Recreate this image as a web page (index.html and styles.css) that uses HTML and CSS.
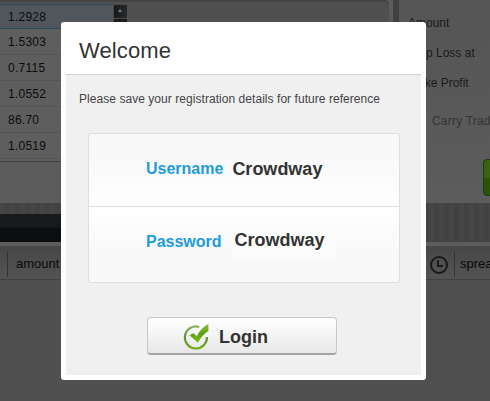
FILE: index.html
```html
<!DOCTYPE html>
<html lang="en">
<head>
<meta charset="utf-8">
<title>Welcome</title>
<link rel="stylesheet" href="styles.css">
</head>
<body>
<div class="platform">
  <div class="workspace">
    <section class="left">
      <div class="rates">
        <div class="list">
          <div class="rate selected">1.2928</div>
          <div class="rate">1.5303</div>
          <div class="rate">0.7115</div>
          <div class="rate">1.0552</div>
          <div class="rate">86.70</div>
          <div class="rate">1.0519</div>
        </div>
        <div class="scroll"><span class="up"></span><span class="thumb"></span></div>
        <div class="chart"></div>
      </div>
      <div class="footer"></div>
      <div class="stripes"></div>
      <div class="darkbar"></div>
    </section>
    <div class="divider"></div>
    <section class="right">
      <div class="order">
        <div class="field">Amount</div>
        <div class="field">Stop Loss at</div>
        <div class="field profit">Take Profit</div>
        <div class="carry">Carry Trad</div>
        <div class="go"></div>
      </div>
      <div class="stripes tall"></div>
    </section>
  </div>
  <div class="columns">
    <div class="col amount">amount</div>
    <div class="col clock">
      <svg width="20" height="20" viewBox="0 0 20 20"><circle cx="10" cy="10" r="8" fill="#505050" stroke="#191919" stroke-width="2"/><path d="M9 5V11H14" fill="none" stroke="#191919" stroke-width="2"/></svg>
    </div>
    <div class="col spread">sprea</div>
  </div>
</div>

<div class="modal">
  <h1>Welcome</h1>
  <div class="content">
    <p>Please save your registration details for future reference</p>
    <div class="card">
      <div class="row user"><span class="label">Username</span><span class="value">Crowdway</span></div>
      <div class="row pass"><span class="label">Password</span><span class="value">Crowdway</span></div>
    </div>
    <button class="login">
      <svg width="26" height="27" viewBox="0 0 26 27">
        <defs><linearGradient id="leaf" x1="0" y1="0" x2="0" y2="1"><stop offset="0" stop-color="#8fc03a"/><stop offset=".5" stop-color="#5c9f16"/><stop offset="1" stop-color="#7cc010"/></linearGradient>
        <linearGradient id="ring" x1="0" y1="0" x2="0" y2="1"><stop offset="0" stop-color="#8db065"/><stop offset=".5" stop-color="#5f9132"/><stop offset="1" stop-color="#6fae17"/></linearGradient></defs>
        <path d="M16.2 4A11 11 0 1 0 23.9 14" fill="none" stroke="url(#ring)" stroke-width="2.2"/>
        <path d="M6.4 12.3L10.6 10.3L13.8 13.2C16.4 8.5 19.5 4.2 25.4 1V8C20.8 10.6 18 14.5 14.9 19.8Z" fill="url(#leaf)"/>
      </svg>
      <span>Login</span>
    </button>
  </div>
</div>
</body>
</html>
```
FILE: styles.css
```css
* { box-sizing: border-box; }
body {
  margin: 0;
  width: 490px;
  height: 401px;
  overflow: hidden;
  background: #505050;
  font-family: "Liberation Sans", Arial, sans-serif;
}
.platform { width: 490px; }
.workspace {
  display: grid;
  grid-template-columns: 393px 6px 1fr;
  height: 242px;
  overflow: hidden;
}
.left { display: flex; flex-direction: column; background: #5c5c5c; }
.rates {
  display: flex;
  height: 162px;
  margin-right: 4px;
  padding: 2px 0 0;
  border-top: 2px solid #444;
  border-bottom: 1px solid #444;
  border-top-right-radius: 4px;
  background: #505050;
}
.list { width: 113px; background: #5e5e5e; }
.rate {
  height: 26px;
  padding-left: 8px;
  border-bottom: 1px solid #545454;
  color: #0b0b0b;
  font-size: 12px;
  line-height: 27px;
  letter-spacing: .25px;
}
.rate.selected {
  height: 25px;
  border-top: 1px solid #254e64;
  border-bottom: 1px solid #254e64;
  background: #50565b;
  line-height: 24px;
}
.scroll { width: 14px; padding-left: 1px; background: #4a4a4a; }
.up { display: flex; height: 13px; margin-top: 1px; padding: 4px 4px; background: linear-gradient(100deg, #15171b, #292b2f); }
.up::before { content: ""; width: 0; height: 0; border: 2.5px solid transparent; border-top: 0; border-bottom: 3px solid #838383; }
.thumb { display: block; height: 100px; margin-top: 1px; background: #1b1b1c; }
.chart { flex: 1; background: #505050; }
.footer { height: 41px; background: #5c5c5c; }
.stripes { height: 11px; background: repeating-linear-gradient(90deg, #464646 0 5px, #424242 5px 10px); }
.stripes.tall { height: 39px; }
.darkbar { height: 28px; background: linear-gradient(#18191d 0 13px, #0d0e12 14px); }
.divider { background: #414141; }
.right { background: #5c5c5c; }
.order { height: 203px; padding: 8px 0 0 9px; color: #1b1b1b; font-size: 12px; white-space: nowrap; background: linear-gradient(#555, #5c5c5c); }
.field { height: 30px; line-height: 30px; }
.profit { padding-left: 4px; }
.carry { height: 46px; padding: 8px 0 0 24px; line-height: 30px; color: #353535; letter-spacing: .2px; }
.go { width: 40px; height: 37px; margin: 15px 0 0 75px; border: 1px solid #213c0b; border-radius: 4px; background: linear-gradient(#386313 0 50%, #2b5506 50%); }
.columns {
  display: grid;
  grid-template-columns: 7px 421px 26px 1fr;
  height: 38px;
  border-top: 4px solid #5c5c5c;
  border-bottom: 1px solid #424242;
  background: linear-gradient(#474747, #535353);
}
.col { height: 25px; margin-top: 6px; color: #0a0a0a; font-size: 13px; line-height: 23px; }
.amount { grid-column: 2; padding-left: 8px; border-left: 1px solid #333; }
.clock { padding: 3px 0 0 1px; }
.spread { padding-left: 5px; border-left: 1px solid #333; }

.modal {
  position: absolute;
  top: 22px;
  left: 61px;
  width: 365px;
  height: 358px;
  padding: 0 5px 5px;
  border-radius: 3px;
  background: #fff;
}
h1 {
  height: 53px;
  margin: 0;
  padding: 4px 0 0 13px;
  border-bottom: 1px solid #d0d0d0;
  color: #333;
  font-size: 22px;
  font-weight: normal;
  line-height: 50px;
  letter-spacing: .1px;
}
.content { height: 300px; padding: 16px 0 0; background: #f0f0f0; }
p { margin: 0 0 0 13px; color: #444; font-size: 12px; line-height: 16px; letter-spacing: .05px; }
.card {
  width: 312px;
  height: 150px;
  margin: 26px 0 0 22px;
  border: 1px solid #dedede;
  border-radius: 3px;
  overflow: hidden;
}
.row { display: flex; padding-left: 57px; font-weight: bold; white-space: nowrap; }
.user { height: 73px; border-bottom: 1px solid #dedede; background: linear-gradient(#f8f8f8 25%, #fff); }
.pass { height: 75px; background: linear-gradient(#fff, #f8f8f8 65%); }
.label { color: #219bd9; font-size: 16px; line-height: 70px; }
.value { margin-left: 9px; color: #333; font-size: 18px; line-height: 70px; }
.pass .value {
  height: 35px;
  margin: 18px 0 0 9px;
  padding: 0 10px 0 4px;
  background: #fbfbfb;
  line-height: 30px;
}
.login {
  display: flex;
  align-items: center;
  width: 190px;
  height: 38px;
  margin: 34px 0 0 81px;
  padding: 0 0 0 35px;
  border: 1px solid #c8c8c8;
  border-bottom: 2px solid #a4a4a4;
  border-radius: 4px;
  background: linear-gradient(#fff, #e8e8e8);
  color: #333;
  font: bold 18px "Liberation Sans", Arial, sans-serif;
}
.login svg { margin-top: 1px; }
.login span { margin: 3px 0 0 10px; }
```
